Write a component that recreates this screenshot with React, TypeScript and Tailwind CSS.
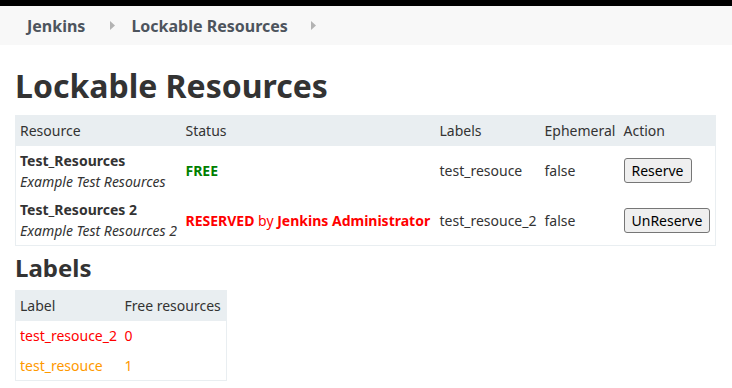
import React from "react";

const Caret = ({ className }: { className: string }) => (
  <svg width="5" height="9" viewBox="0 0 5 9" className={className}>
    <path d="M0 0 L5 4.5 L0 9 Z" fill="#b3b3b3" />
  </svg>
);

export default function App() {
  return (
    <div
      className="w-[732px] h-[388px] bg-white text-[#333] text-[14px] overflow-hidden"
      style={{ fontFamily: '"Noto Sans", "Open Sans", sans-serif' }}
    >
      <div className="h-[6px] bg-black" />
      <div className="h-[39px] bg-[#f8f8f8] flex items-center pl-[27px] text-[16px] font-bold text-[#4d545d]">
        <span>Jenkins</span>
        <Caret className="ml-[25px] mr-[16px]" />
        <span>Lockable Resources</span>
        <Caret className="ml-[23px]" />
      </div>
      <div className="px-[15px]">
        <h1 className="text-[32px] font-bold leading-[40px] mt-[21px] mb-[9px] text-[#333]">
          Lockable Resources
        </h1>
        <table className="border-collapse border border-[#e9eef1] w-[700px] table-fixed">
          <colgroup>
            <col className="w-[166px]" />
            <col className="w-[254px]" />
            <col className="w-[105px]" />
            <col className="w-[79px]" />
            <col className="w-[96px]" />
          </colgroup>
          <thead>
            <tr className="bg-[#e9eef1] h-[30px] text-left">
              <th className="font-normal pl-[4px]">Resource</th>
              <th className="font-normal pl-[4px]">Status</th>
              <th className="font-normal pl-[4px]">Labels</th>
              <th className="font-normal pl-[4px]">Ephemeral</th>
              <th className="font-normal pl-[4px]">Action</th>
            </tr>
          </thead>
          <tbody>
            <tr className="h-[50px]">
              <td className="pl-[4px] leading-[21px]">
                <div className="font-bold">Test_Resources</div>
                <div className="italic">Example Test Resources</div>
              </td>
              <td className="pl-[4px] font-bold text-[#008000]">FREE</td>
              <td className="pl-[4px]">test_resouce</td>
              <td className="pl-[4px]">false</td>
              <td className="pl-[4px]">
                <button className="h-[25px] px-[7px] border border-[#767676] rounded-[3px] bg-[#efefef] text-black text-[14px]">
                  Reserve
                </button>
              </td>
            </tr>
            <tr className="h-[50px]">
              <td className="pl-[4px] leading-[21px]">
                <div className="font-bold">Test_Resources 2</div>
                <div className="italic">Example Test Resources 2</div>
              </td>
              <td className="pl-[4px] text-[#ff0000] whitespace-nowrap">
                <span className="font-bold">RESERVED</span> by{" "}
                <span className="font-bold">Jenkins Administrator</span>
              </td>
              <td className="pl-[4px]">test_resouce_2</td>
              <td className="pl-[4px]">false</td>
              <td className="pl-[4px]">
                <button className="h-[25px] px-[7px] border border-[#767676] rounded-[3px] bg-[#efefef] text-black text-[14px]">
                  UnReserve
                </button>
              </td>
            </tr>
          </tbody>
        </table>
        <h2 className="text-[24px] font-bold leading-[28px] mt-[8px] mb-[8px] text-[#333]">
          Labels
        </h2>
        <table className="border-collapse border border-[#e9eef1] w-[212px] table-fixed">
          <colgroup>
            <col className="w-[105px]" />
            <col className="w-[106px]" />
          </colgroup>
          <thead>
            <tr className="bg-[#e9eef1] h-[30px] text-left">
              <th className="font-normal pl-[4px]">Label</th>
              <th className="font-normal pl-[4px] whitespace-nowrap">Free resources</th>
            </tr>
          </thead>
          <tbody>
            <tr className="h-[30px] text-[#ff0000]">
              <td className="pl-[4px]">test_resouce_2</td>
              <td className="pl-[4px]">0</td>
            </tr>
            <tr className="h-[30px] text-[#ff9900]">
              <td className="pl-[4px]">test_resouce</td>
              <td className="pl-[4px]">1</td>
            </tr>
          </tbody>
        </table>
      </div>
    </div>
  );
}
